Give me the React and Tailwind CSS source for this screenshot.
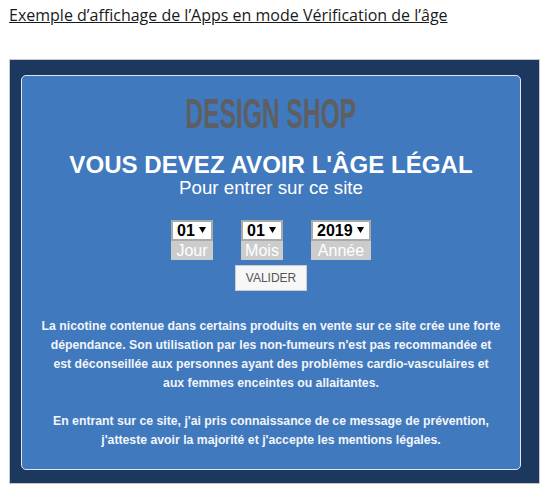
export default function App() {
  const Sel = ({ v, w, l }) => (
    <div className={`flex flex-col ${w}`}>
      <div className="h-[21px] bg-white border-2 border-[#a9a9a9] flex items-center justify-between pl-[4px] pr-[5px] text-[16px] font-bold text-black leading-none">
        <span>{v}</span>
        <svg width="7" height="6" viewBox="0 0 7 6" className="mb-[1px]"><path d="M0 0h7L3.5 6z" fill="#000" /></svg>
      </div>
      <div className="h-[19px] bg-[#cccccc] text-white text-[16px] leading-[19px] text-center">{l}</div>
    </div>
  );
  return (
    <div className="w-[555px] h-[497px] bg-white font-['Liberation_Sans',sans-serif] overflow-hidden">
      <div className="h-[59px] pl-[9px] pt-[4px]">
        <a className="font-['Open_Sans',sans-serif] text-[16px] leading-[22px] text-[#1a1a1a] underline">Exemple d’affichage de l’Apps en mode Vérification de l’âge</a>
      </div>
      <div className="ml-[9px] w-[531px] h-[425px] bg-[#1c385f] border border-[#c8c8c8] pl-[11px] pt-[15px]">
        <div className="w-[500px] h-[395px] bg-[#4079bd] border border-[#dfe6ee] rounded-[5px] flex flex-col items-center text-white">
          <div className="mt-[16px] h-[44px] scale-x-[0.585] font-bold text-[42px] leading-[44px] whitespace-nowrap text-[#5f5f62]">DESIGN SHOP</div>
          <h1 className="mt-[16px] text-[24.1px] leading-[25px] font-bold">VOUS DEVEZ AVOIR L'ÂGE LÉGAL</h1>
          <p className="text-[18.7px] leading-[22px]">Pour entrer sur ce site</p>
          <div className="mt-[21px] flex gap-[28px]">
            <Sel v="01" w="w-[42px]" l="Jour" />
            <Sel v="01" w="w-[42px]" l="Mois" />
            <Sel v="2019" w="w-[60px]" l="Année" />
          </div>
          <button className="mt-[5px] w-[72px] h-[26px] bg-[#f7f7f7] border border-[#cccccc] text-[#555555] text-[12px]">VALIDER</button>
          <div className="mt-[26px] w-[480px] text-center text-[12.25px] leading-[19px] font-bold text-[#f2f5fa]">
            <p>La nicotine contenue dans certains produits en vente sur ce site crée une forte<br />dépendance. Son utilisation par les non-fumeurs n'est pas recommandée et<br />est déconseillée aux personnes ayant des problèmes cardio-vasculaires et<br />aux femmes enceintes ou allaitantes.</p>
            <p className="mt-[19px]">En entrant sur ce site, j'ai pris connaissance de ce message de prévention,<br />j'atteste avoir la majorité et j'accepte les mentions légales.</p>
          </div>
        </div>
      </div>
    </div>
  );
}
